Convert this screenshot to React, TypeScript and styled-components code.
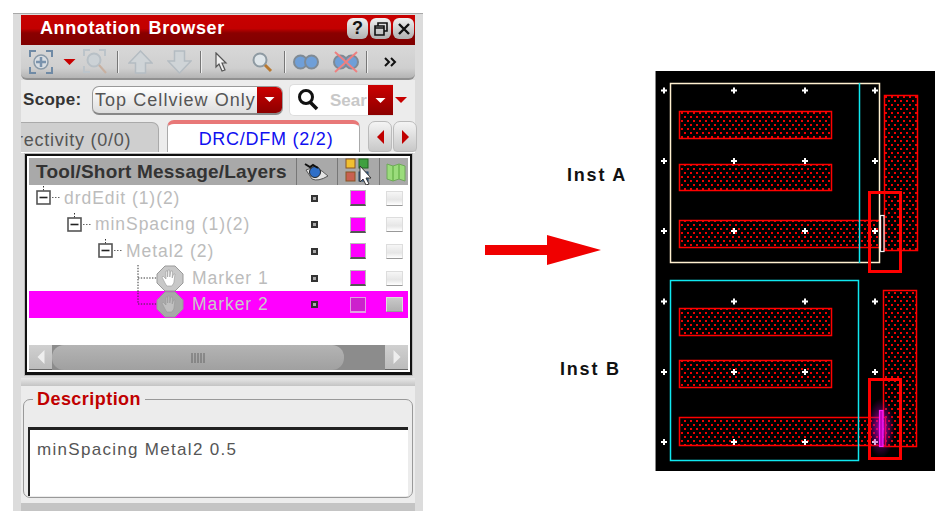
import styled, { createGlobalStyle } from "styled-components";

const GlobalStyle = createGlobalStyle`
  html, body {
    margin: 0;
    padding: 0;
    background: #fff;
    font-family: "Liberation Sans", Arial, sans-serif;
  }
`;

const Page = styled.div`
  display: flex;
  align-items: flex-start;
  width: 947px;
  height: 524px;
  overflow: hidden;
`;

const Panel = styled.div`
  display: flex;
  flex-direction: column;
  box-sizing: border-box;
  width: 410px;
  height: 498px;
  margin: 13px 0 0 13px;
  padding: 1px 8px 0 8px;
  background: #dcdcdc;
  border-top: 1px solid #a8a8a8;
`;

const TitleBar = styled.div`
  display: flex;
  align-items: center;
  justify-content: space-between;
  flex: none;
  box-sizing: border-box;
  height: 30px;
  padding: 0 1px 3px 19px;
  background: linear-gradient(#c80000 0%, #c20000 45%, #8a0000 60%, #800000 100%);
`;

const Title = styled.span`
  color: #fff;
  font-size: 18px;
  font-weight: 700;
  letter-spacing: 0.6px;
  word-spacing: 2px;
`;

const WinButtons = styled.div`
  display: flex;
  gap: 2px;
`;

const WinButton = styled.div`
  display: flex;
  align-items: center;
  justify-content: center;
  width: 21px;
  height: 21px;
  border-radius: 6px;
  background: linear-gradient(#f0f0f0, #b0b0b0);
  color: #111;
  font-size: 18px;
  font-weight: 700;
`;

const Toolbar = styled.div`
  display: flex;
  align-items: center;
  flex: none;
  box-sizing: border-box;
  height: 35px;
  background: linear-gradient(#d8d8d8, #cfcfcf 70%, #b4b4b4);
  border-bottom: 2px solid #909090;
  border-radius: 0 0 6px 6px;
`;

const ToolSlot = styled.div<{ $w: number; $ml?: number }>`
  display: flex;
  align-items: center;
  justify-content: center;
  flex: none;
  width: ${(p) => p.$w}px;
  margin-left: ${(p) => p.$ml ?? 0}px;
`;

const ToolSep = styled.div<{ $ml: number }>`
  flex: none;
  width: 1px;
  height: 22px;
  margin-left: ${(p) => p.$ml}px;
  background: #777;
  box-shadow: 1px 0 0 #eee;
`;

const ScopeRow = styled.div`
  display: flex;
  align-items: center;
  flex: none;
  height: 40px;
  padding-left: 2px;
  background: #ececec;
`;

const ScopeLabel = styled.span`
  width: 69px;
  flex: none;
  color: #333;
  font-size: 17px;
  font-weight: 700;
  letter-spacing: 0.3px;
`;

const Combo = styled.div`
  display: flex;
  align-items: stretch;
  box-sizing: border-box;
  width: 191px;
  height: 29px;
  border: 1px solid #999;
  border-bottom: 2px solid #888;
  border-radius: 7px;
  overflow: hidden;
  background: linear-gradient(#fff, #ddd);
`;

const ComboText = styled.span`
  flex: 1;
  padding-left: 2px;
  color: #555;
  font-size: 18px;
  line-height: 26px;
  letter-spacing: 1.05px;
  white-space: nowrap;
  overflow: hidden;
`;

const RedDrop = styled.div`
  display: flex;
  align-items: center;
  justify-content: center;
  flex: none;
  width: 25px;
  background: linear-gradient(#cc0000, #8c0000);
`;

const SearchBox = styled.div`
  display: flex;
  align-items: stretch;
  box-sizing: border-box;
  width: 104px;
  height: 32px;
  margin-left: 6px;
  padding-left: 7px;
  background: #fff;
  border: 1px solid #ddd;
  border-right: 0;
  border-radius: 5px 0 0 5px;
`;

const SearchText = styled.span`
  flex: 1;
  margin-left: 11px;
  color: #c8c8c8;
  font-size: 17px;
  font-weight: 700;
  line-height: 32px;
  white-space: nowrap;
  overflow: hidden;
`;

const TabRow = styled.div`
  display: flex;
  align-items: flex-end;
  flex: none;
  box-sizing: border-box;
  height: 33px;
  background: #ececec;
  border-bottom: 1px solid #fff;
`;

const GrayTab = styled.div`
  box-sizing: border-box;
  flex: none;
  width: 138px;
  height: 30px;
  padding-top: 7px;
  overflow: hidden;
  background: #cfcfcf;
  border: 1px solid #aaa;
  border-left: 0;
  border-bottom: 0;
  border-radius: 0 7px 0 0;
  color: #555;
  font-size: 18px;
  letter-spacing: 0.75px;
  white-space: nowrap;
`;

const ActiveTab = styled.div`
  box-sizing: border-box;
  flex: none;
  width: 193px;
  height: 32px;
  margin-left: 8px;
  padding: 5px 0 0 5px;
  background: #fff;
  border: 1px solid #aaa;
  border-top: 4px solid #e87878;
  border-bottom: 0;
  border-radius: 7px 7px 0 0;
  color: #1010f0;
  font-size: 18px;
  letter-spacing: 0.75px;
  text-align: center;
`;

const TabArrow = styled.div<{ $ml: number }>`
  display: flex;
  align-items: center;
  justify-content: center;
  flex: none;
  width: 24px;
  height: 31px;
  margin-left: ${(p) => p.$ml}px;
  background: linear-gradient(#f4f4f4, #c8c8c8);
  border: 1px solid #bbb;
  box-sizing: border-box;
  border-radius: 7px 7px 4px 4px;
`;

const TreeFrame = styled.div`
  display: flex;
  flex-direction: column;
  flex: none;
  box-sizing: border-box;
  width: 387px;
  height: 221px;
  margin: 1px 0 0 4px;
  padding: 2px;
  background: #fff;
  border: 2px solid #111;
  border-bottom-width: 3px;
  box-shadow: 0 0 0 1px #bbb;
`;

const TreeHeader = styled.div`
  display: flex;
  align-items: center;
  flex: none;
  height: 27px;
  background: #a9a9a9;
`;

const HeaderName = styled.span`
  box-sizing: border-box;
  flex: none;
  width: 267px;
  padding-left: 7px;
  color: #333;
  font-size: 19px;
  font-weight: 700;
  letter-spacing: 0.2px;
  white-space: nowrap;
`;

const HeaderCell = styled.div<{ $w: number }>`
  display: flex;
  align-items: center;
  justify-content: center;
  box-sizing: border-box;
  flex: none;
  width: ${(p) => p.$w}px;
  height: 100%;
  border-left: 1px solid #777;
`;

const TreeBody = styled.div`
  flex: 1;
  background: #fff;
`;

const TreeRow = styled.div<{ $selected?: boolean }>`
  display: flex;
  align-items: center;
  height: 26.6px;
  background: ${(p) => (p.$selected ? "#ff00ff" : "transparent")};
`;

const RowName = styled.div<{ $indent: number; $selected?: boolean }>`
  display: flex;
  align-items: center;
  box-sizing: border-box;
  flex: none;
  width: 267px;
  height: 100%;
  padding-left: ${(p) => p.$indent}px;
  color: ${(p) => (p.$selected ? "#c9c9c9" : "#bcbcbc")};
  font-size: 17.5px;
  letter-spacing: 0.95px;
  white-space: nowrap;
`;

const VisCell = styled.div`
  display: flex;
  justify-content: center;
  box-sizing: border-box;
  flex: none;
  width: 41px;
  padding-right: 4px;
`;

const VisDot = styled.div`
  width: 3px;
  height: 3px;
  border: 2px solid #333;
  background: #aaa;
`;

const SwatchCell = styled.div`
  display: flex;
  justify-content: center;
  flex: none;
  width: 41px;
`;

const Swatch = styled.div<{ $selected?: boolean }>`
  box-sizing: border-box;
  width: 16px;
  height: 16px;
  background: ${(p) => (p.$selected ? "#cc22cc" : "#ff00ff")};
  border: 1px solid ${(p) => (p.$selected ? "#e0a0e0" : "#bbb")};
  border-bottom: 2px solid ${(p) => (p.$selected ? "#e0a0e0" : "#555")};
`;

const CheckCell = styled.div`
  display: flex;
  justify-content: center;
  box-sizing: border-box;
  flex: none;
  width: 34px;
  padding-right: 2px;
`;

const Check = styled.div<{ $selected?: boolean }>`
  box-sizing: border-box;
  width: 17px;
  height: 15px;
  background: ${(p) => (p.$selected ? "linear-gradient(#c8c8c8, #b0b0b0)" : "linear-gradient(#f6f6f6, #e6e6e6 60%, #fff)")};
  border: 1px solid #ddd;
  border-bottom: 1px solid #999;
`;

const ScrollBar = styled.div`
  display: flex;
  align-items: stretch;
  flex: none;
  height: 25px;
  background: #8c8c8c;
`;

const ScrollBtn = styled.div`
  display: flex;
  align-items: center;
  justify-content: center;
  flex: none;
  width: 23px;
  background: linear-gradient(#d0d0d0, #bcbcbc);
  border-bottom: 1px solid #666;
`;

const ScrollThumb = styled.div`
  display: flex;
  align-items: center;
  justify-content: center;
  flex: none;
  width: 292px;
  margin-right: auto;
  background: linear-gradient(#b4b4b4, #a0a0a0);
  border-radius: 12px;
`;

const Divider = styled.div`
  flex: none;
  height: 8px;
  margin-top: 3px;
  background: linear-gradient(#e8e8e8, #c4c4c4);
`;

const DescArea = styled.div`
  flex: none;
  box-sizing: border-box;
  height: 117px;
  padding: 6px 2px 0 2px;
  background: #ececec;
`;

const Fieldset = styled.fieldset`
  box-sizing: border-box;
  height: 106px;
  margin: 0;
  padding: 21px 4px 0 4px;
  min-inline-size: auto;
  border: 1px solid #999;
  border-radius: 7px;
`;

const Legend = styled.legend`
  margin-left: 5px;
  padding: 0 4px;
  color: #c00000;
  font-size: 18px;
  font-weight: 700;
  line-height: 14px;
  letter-spacing: 0.45px;
`;

const DescText = styled.div`
  box-sizing: border-box;
  height: 69px;
  padding: 10px 0 0 7px;
  background: #fff;
  border-top: 3px solid #222;
  border-left: 2px solid #222;
  color: #555;
  font-size: 17px;
  letter-spacing: 1.3px;
`;

const BottomBar = styled.div`
  flex: 1;
  background: #c4c4c4;
`;

const Middle = styled.div`
  display: flex;
  flex-direction: column;
  flex: none;
  width: 232px;
  padding-top: 165px;
`;

const InstLabel = styled.div<{ $indent: number; $mt?: number }>`
  height: 20px;
  margin-top: ${(p) => p.$mt ?? 0}px;
  margin-left: ${(p) => p.$indent}px;
  color: #111;
  font-size: 18px;
  font-weight: 700;
  line-height: 20px;
  letter-spacing: 1.8px;
`;

const FlowArrow = styled.svg`
  display: block;
  margin: 50px 0 0 62px;
`;

const LayoutView = styled.svg`
  flex: none;
  margin-top: 71px;
  border-left: 1px solid #888;
`;

const dark = "#6f8aa5";

function FitIcon() {
  return (
    <svg width="26" height="26" viewBox="0 0 26 26">
      <path d="M2 8V2h6M18 2h6v6M24 18v6h-6M8 24H2v-6" fill="none" stroke={dark} strokeWidth="2" />
      <circle cx="13" cy="13" r="7" fill="#d8dde2" stroke="#8a9aa8" strokeWidth="1.5" />
      <path d="M13 8v10M8 13h10" stroke="#7a93ad" strokeWidth="2.5" />
    </svg>
  );
}

function RedTriangle({ w = 13, h = 6, color = "#c80000" }: { w?: number; h?: number; color?: string }) {
  return (
    <svg width={w} height={h} viewBox="0 0 12 6">
      <path d="M0 0h12L6 6z" fill={color} />
    </svg>
  );
}

function ZoomFitIcon() {
  return (
    <svg width="26" height="26" viewBox="0 0 26 26">
      <path d="M1 7V1h6M16 1h6v6M1 17v6h6" fill="none" stroke="#bcc4ca" strokeWidth="2" />
      <circle cx="11" cy="11" r="6.5" fill="#ccd2d6" stroke="#b8c0c6" strokeWidth="2" />
      <path d="M16 16l7 8" stroke="#c8b0a0" strokeWidth="2" />
    </svg>
  );
}

function UpDownIcon({ down }: { down?: boolean }) {
  return (
    <svg width="25" height="24" viewBox="0 0 25 24" style={down ? { transform: "scaleY(-1)" } : undefined}>
      <path d="M12.5 1L24 13h-6.5v10h-10V13H1z" fill="#cfd4d7" stroke="#b4bcc2" strokeWidth="1.5" />
    </svg>
  );
}

function PointerIcon() {
  return (
    <svg width="14" height="20" viewBox="0 0 14 20">
      <path d="M2 1l10 10H8l3 7-3 1-3-7-3 3z" fill="#f0f0f0" stroke="#555" strokeWidth="1.2" />
    </svg>
  );
}

function MagnifierIcon() {
  return (
    <svg width="22" height="22" viewBox="0 0 22 22">
      <circle cx="9" cy="9" r="6.5" fill="#dfe6ea" stroke="#8e9aa2" strokeWidth="2" />
      <path d="M14 14l6 6" stroke="#b87830" strokeWidth="3" />
    </svg>
  );
}

function BinocularIcon({ crossed }: { crossed?: boolean }) {
  return (
    <svg width="26" height="24" viewBox="0 0 26 24">
      <circle cx="7.5" cy="12" r="6.5" fill="#6f9fd8" stroke="#7f8a94" strokeWidth="2" />
      <circle cx="18.5" cy="12" r="6.5" fill="#6f9fd8" stroke="#7f8a94" strokeWidth="2" />
      {crossed && <path d="M2 2l22 20M24 2L2 22" stroke="#ef8080" strokeWidth="2" />}
    </svg>
  );
}

function LensIcon() {
  return (
    <svg width="22" height="23" viewBox="0 0 22 23" style={{ marginTop: 3 }}>
      <circle cx="9" cy="9" r="6.5" fill="#fff" stroke="#111" strokeWidth="3" />
      <path d="M13 14l7 7" stroke="#111" strokeWidth="3.5" />
    </svg>
  );
}

function SideTriangle({ left, color = "#c00000", w = 7, h = 14 }: { left?: boolean; color?: string; w?: number; h?: number }) {
  return (
    <svg width={w} height={h} viewBox="0 0 7 14">
      <path d={left ? "M7 0v14L0 7z" : "M0 0v14l7-7z"} fill={color} />
    </svg>
  );
}

function EyeIcon() {
  return (
    <svg width="26" height="20" viewBox="0 0 26 20">
      <path d="M2 8q10-6 22 6-10 6-16 3z" fill="#e4e4e4" stroke="#555" />
      <circle cx="11" cy="10" r="5.5" fill="#2f6fc8" stroke="#222" />
      <path d="M1 2l5 3 3-2 5 3" fill="none" stroke="#111" strokeWidth="2" />
    </svg>
  );
}

function LayersPickIcon() {
  return (
    <svg width="28" height="28" viewBox="0 0 28 28">
      <rect x="1" y="1" width="9" height="9" fill="#f0c030" stroke="#885522" />
      <rect x="14" y="1" width="9" height="9" fill="#40a040" stroke="#226622" />
      <rect x="1" y="14" width="9" height="9" fill="#c86050" stroke="#885522" />
      <rect x="14" y="14" width="9" height="9" fill="#4a78a8" stroke="#224466" />
      <path d="M15 8l11 12h-5l3 6-3 1-3-6-3 3z" fill="#fff" stroke="#333" />
    </svg>
  );
}

function FlagIcon() {
  return (
    <svg width="20" height="20" viewBox="0 0 20 20">
      <path d="M1 2l6 2 6-2 6 2v15l-6-2-6 2-6-2z" fill="#9bdc7c" stroke="#6fa85a" />
      <path d="M7 4v15M13 2v15" stroke="#6fb850" strokeWidth="1.5" />
    </svg>
  );
}

function Expander() {
  return (
    <svg width="27" height="26" viewBox="0 0 27 26" style={{ flex: "none", marginRight: 1 }}>
      <path d="M7.5 1v5" stroke="#333" strokeDasharray="1.5 1.5" />
      <rect x="1" y="6" width="13" height="13" fill="#fff" stroke="#555" strokeWidth="1.6" />
      <path d="M3.5 12.5h8" stroke="#222" strokeWidth="1.6" />
      <path d="M16 12.5h8" stroke="#666" strokeDasharray="1.5 1.5" />
    </svg>
  );
}

function MarkerIcon({ selected, last }: { selected?: boolean; last?: boolean }) {
  return (
    <svg width="48" height="27" viewBox="0 0 48 27" style={{ flex: "none", marginRight: 7 }}>
      <path d={last ? "M1 -1V13H20" : "M1 0V27M1 13H20"} fill="none" stroke="#333" strokeDasharray="1.4 1.4" />
      <path d="M27 1h10l8 8v9l-8 8H27l-8-8V9z" transform="translate(1 0)" fill={selected ? "#a8a8a8" : "#c8c8c8"} stroke="#999" />
      <path
        d="M26 18l-3-6 1-1 3 3V6h1.6v6l.4-7h1.6l.2 7 1-6h1.6l-.2 7 1.4-4h1.4l-1.2 9-2 3h-5z"
        transform="translate(2 0)"
        fill={selected ? "#c0c0c0" : "#fff"}
        stroke="#999"
        strokeWidth="0.6"
      />
    </svg>
  );
}

const rows = [
  { name: "drdEdit (1)(2)", indent: 7, kind: "node" },
  { name: "minSpacing (1)(2)", indent: 38, kind: "node" },
  { name: "Metal2 (2)", indent: 69, kind: "node" },
  { name: "Marker 1", indent: 108, kind: "marker" },
  { name: "Marker 2", indent: 108, kind: "marker", selected: true },
];

const X0 = 656;
const Y0 = 71;

function Hatch({ x, y, x2, y2 }: { x: number; y: number; x2: number; y2: number }) {
  return (
    <rect
      x={x - X0}
      y={y - Y0}
      width={x2 - x}
      height={y2 - y}
      fill="url(#dots)"
      stroke="#ff0000"
      strokeWidth="1.5"
    />
  );
}

function Crosses({ ys }: { ys: number[] }) {
  const xs = [664, 734, 805, 875];
  return (
    <>
      {ys.map((y) =>
        xs.map((x) => (
          <path
            key={`${x}-${y}`}
            d={`M${x - X0 - 3} ${y - Y0}h6M${x - X0} ${y - Y0 - 3}v6`}
            stroke="#fff"
            strokeWidth="2"
          />
        ))
      )}
    </>
  );
}

function ChipLayout() {
  return (
    <LayoutView width="279" height="400" viewBox="0 0 279 400">
      <defs>
        <pattern id="dots" width="6" height="8" patternUnits="userSpaceOnUse">
          <rect width="6" height="8" fill="#000" />
          <rect x="1" y="1" width="2" height="2" fill="#ee0000" />
          <rect x="4" y="5" width="2" height="2" fill="#ee0000" />
        </pattern>
        <radialGradient id="glow">
          <stop offset="0%" stopColor="#ff00ff" stopOpacity="0.75" />
          <stop offset="60%" stopColor="#a000a0" stopOpacity="0.4" />
          <stop offset="100%" stopColor="#800080" stopOpacity="0" />
        </radialGradient>
      </defs>
      <rect width="279" height="400" fill="#000" />

      {/* Inst A */}
      <Hatch x={884.5} y={95.5} x2={917.5} y2={250.5} />
      <Hatch x={679.5} y={111.5} x2={831.5} y2={138.5} />
      <Hatch x={679.5} y={164.5} x2={831.5} y2={190.5} />
      <Hatch x={679.5} y={220.5} x2={880.5} y2={247.5} />
      <rect x={670.5 - X0} y={83.5 - Y0} width="209" height="179" fill="none" stroke="#fff0d0" strokeWidth="1.5" />
      <path d={`M${859.5 - X0} ${83 - Y0}V${263 - Y0}`} stroke="#10e8f0" strokeWidth="1.5" />
      <Crosses ys={[90.5, 161, 231]} />
      <rect x={880.5 - X0} y={215.5 - Y0} width="3.5" height="36" fill="none" stroke="#f0f0f0" strokeWidth="1.2" />
      <rect x={869.5 - X0} y={192.5 - Y0} width="31" height="79" fill="none" stroke="#ff0000" strokeWidth="3" />

      {/* Inst B */}
      <Hatch x={883.5} y={290.5} x2={916.5} y2={446.5} />
      <Hatch x={679.5} y={308.5} x2={831.5} y2={335.5} />
      <Hatch x={679.5} y={360.5} x2={831.5} y2={387.5} />
      <Hatch x={679.5} y={417.5} x2={885.5} y2={445.5} />
      <rect x={670.5 - X0} y={280.5 - Y0} width="188" height="180" fill="none" stroke="#10e8f0" strokeWidth="1.5" />
      <Crosses ys={[301.5, 372, 442]} />
      <ellipse cx={881 - X0} cy={428 - Y0} rx="14" ry="30" fill="url(#glow)" />
      <rect x={879.5 - X0} y={410.5 - Y0} width="3.5" height="36" fill="#c000c0" stroke="#ff20ff" strokeWidth="1.2" />
      <rect x={869.5 - X0} y={379.5 - Y0} width="31" height="79" fill="none" stroke="#ff0000" strokeWidth="3" />
    </LayoutView>
  );
}

export default function App() {
  return (
    <Page>
      <GlobalStyle />
      <Panel>
        <TitleBar>
          <Title>Annotation Browser</Title>
          <WinButtons>
            <WinButton>?</WinButton>
            <WinButton>
              <svg width="14" height="14" viewBox="0 0 14 14">
                <path d="M4 4V1h9v8h-3M1 4h9v9H1zM1 6h9" fill="none" stroke="#111" strokeWidth="1.6" />
              </svg>
            </WinButton>
            <WinButton>
              <svg width="14" height="14" viewBox="0 0 14 14">
                <path d="M2 2l10 10M12 2L2 12" stroke="#111" strokeWidth="2.4" />
              </svg>
            </WinButton>
          </WinButtons>
        </TitleBar>

        <Toolbar>
          <ToolSlot $w={26} $ml={7}><FitIcon /></ToolSlot>
          <ToolSlot $w={13} $ml={9}><RedTriangle /></ToolSlot>
          <ToolSlot $w={26} $ml={7}><ZoomFitIcon /></ToolSlot>
          <ToolSep $ml={8} />
          <ToolSlot $w={25} $ml={10}><UpDownIcon /></ToolSlot>
          <ToolSlot $w={25} $ml={14}><UpDownIcon down /></ToolSlot>
          <ToolSep $ml={8} />
          <ToolSlot $w={14} $ml={13}><PointerIcon /></ToolSlot>
          <ToolSlot $w={22} $ml={23}><MagnifierIcon /></ToolSlot>
          <ToolSep $ml={11} />
          <ToolSlot $w={26} $ml={8}><BinocularIcon /></ToolSlot>
          <ToolSlot $w={26} $ml={14}><BinocularIcon crossed /></ToolSlot>
          <ToolSep $ml={7} />
          <ToolSlot $w={14} $ml={17}>
            <svg width="14" height="10" viewBox="0 0 14 10">
              <path d="M1 1l4 4-4 4M7 1l4 4-4 4" fill="none" stroke="#111" strokeWidth="2" />
            </svg>
          </ToolSlot>
        </Toolbar>

        <ScopeRow>
          <ScopeLabel>Scope:</ScopeLabel>
          <Combo>
            <ComboText>Top Cellview Only</ComboText>
            <RedDrop><RedTriangle w={11} h={5} color="#fff" /></RedDrop>
          </Combo>
          <SearchBox>
            <LensIcon />
            <SearchText>Sear</SearchText>
            <RedDrop><RedTriangle w={11} h={5} color="#fff" /></RedDrop>
          </SearchBox>
          <ToolSlot $w={12} $ml={2}><RedTriangle w={12} h={6} /></ToolSlot>
        </ScopeRow>

        <TabRow>
          <GrayTab>
            <span style={{ marginLeft: -4 }}>rectivity (0/0)</span>
          </GrayTab>
          <ActiveTab>DRC/DFM (2/2)</ActiveTab>
          <TabArrow $ml={8}><SideTriangle left /></TabArrow>
          <TabArrow $ml={1}><SideTriangle /></TabArrow>
        </TabRow>

        <TreeFrame>
          <TreeHeader>
            <HeaderName>Tool/Short Message/Layers</HeaderName>
            <HeaderCell $w={41}><EyeIcon /></HeaderCell>
            <HeaderCell $w={42}><LayersPickIcon /></HeaderCell>
            <HeaderCell $w={33}><FlagIcon /></HeaderCell>
          </TreeHeader>
          <TreeBody>
            {rows.map((r) => (
              <TreeRow key={r.name} $selected={r.selected}>
                <RowName $indent={r.indent} $selected={r.selected}>
                  {r.kind === "node" ? (
                    <Expander />
                  ) : (
                    <MarkerIcon selected={r.selected} last={r.selected} />
                  )}
                  {r.name}
                </RowName>
                <VisCell><VisDot /></VisCell>
                <SwatchCell><Swatch $selected={r.selected} /></SwatchCell>
                <CheckCell><Check $selected={r.selected} /></CheckCell>
              </TreeRow>
            ))}
          </TreeBody>
          <ScrollBar>
            <ScrollBtn><SideTriangle left color="#eee" w={8} h={14} /></ScrollBtn>
            <ScrollThumb>
              <svg width="14" height="10" viewBox="0 0 14 10">
                <path d="M1 0v10M4 0v10M7 0v10M10 0v10M13 0v10" stroke="#666" />
              </svg>
            </ScrollThumb>
            <ScrollBtn><SideTriangle color="#eee" w={8} h={14} /></ScrollBtn>
          </ScrollBar>
        </TreeFrame>

        <Divider />
        <DescArea>
          <Fieldset>
            <Legend>Description</Legend>
            <DescText>minSpacing Metal2 0.5</DescText>
          </Fieldset>
        </DescArea>
        <BottomBar />
      </Panel>

      <Middle>
        <InstLabel $indent={144}>Inst A</InstLabel>
        <FlowArrow width="116" height="30" viewBox="0 0 116 30">
          <path d="M0 10h62V0l54 15-54 15V20H0z" fill="#f00000" />
        </FlowArrow>
        <InstLabel $indent={137} $mt={94}>Inst B</InstLabel>
      </Middle>

      <ChipLayout />
    </Page>
  );
}
